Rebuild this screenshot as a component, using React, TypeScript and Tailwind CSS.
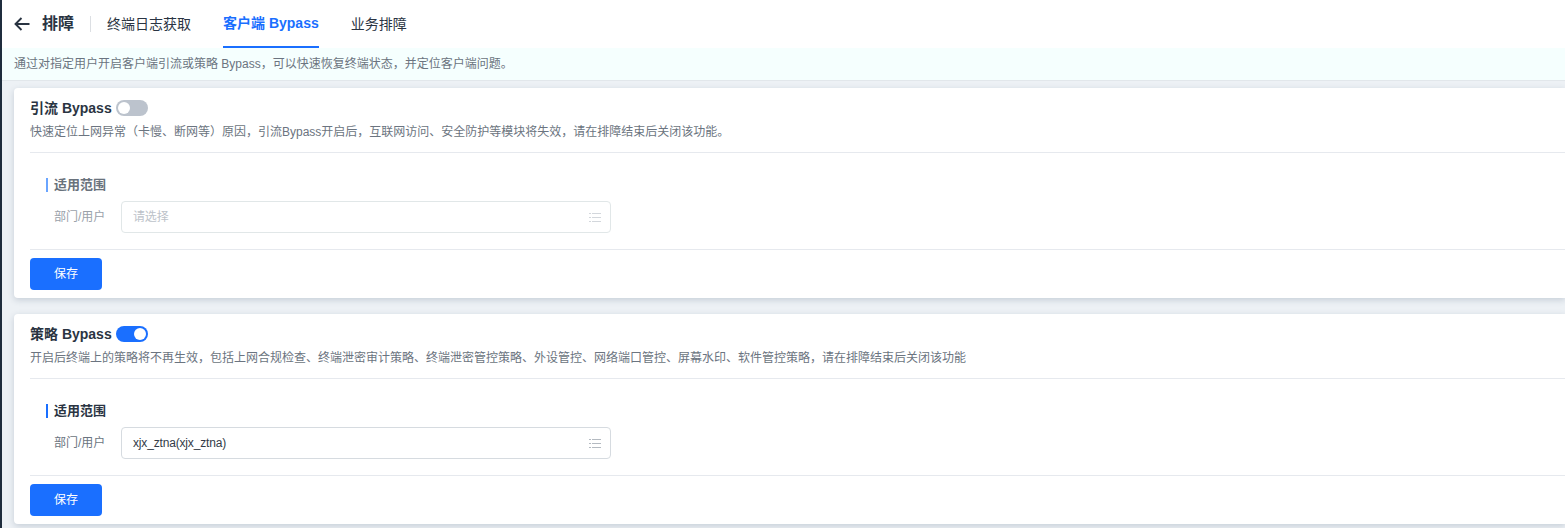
import React from "react";

const font = { fontFamily: '"Liberation Sans", "Noto Sans CJK SC", sans-serif' };

function ListIcon({ dim }: { dim: boolean }) {
  return (
    <svg width="12" height="9" viewBox="0 0 12 9" className={dim ? "text-[#d3d7dc]" : "text-[#b4bac1]"} fill="none" stroke="currentColor" strokeWidth="1">
      <path d="M0 .5h2M3 .5h9M0 4.5h2M3 4.5h9M0 8.5h2M3 8.5h9" />
    </svg>
  );
}

function Toggle({ on }: { on: boolean }) {
  return (
    <span className={`flex h-4 w-8 items-center rounded-full px-0.5 ${on ? "justify-end bg-[#1a6fff]" : "justify-start bg-[#bcc3cd]"}`}>
      <span className="h-3 w-3 rounded-full bg-white" />
    </span>
  );
}

function Card({ name, on, desc, value, disabled }: { name: string; on: boolean; desc: string; value: string; disabled: boolean }) {
  return (
    <section className="ml-3.5 rounded-l-sm bg-white pl-4 pt-2 shadow-[0_2px_6px_rgba(60,80,110,0.22)]">
      <div className="flex h-6 items-center gap-1 text-sm font-bold text-[#2a3442]">
        <span>{name} Bypass</span>
        <Toggle on={on} />
      </div>
      <p className="mt-0.5 h-5 text-xs leading-5 text-[#6b7480]">{desc}</p>
      <div className="mt-2.5 h-px bg-[#e6e9ee]" />
      <div className="pl-4">
        <h3 className={`mt-[25px] flex h-[14px] items-center border-l-2 pl-1.5 text-[13px] font-bold ${disabled ? "border-[#6aa5ff] text-[#69727c]" : "border-[#1a6fff] text-[#2a3442]"}`}>适用范围</h3>
        <div className="mt-[9px] flex items-center">
          <span className={`w-[75px] pl-2 text-xs ${disabled ? "text-[#9aa1a9]" : "text-[#6b7480]"}`}>部门/用户</span>
          <div className={`flex h-8 w-[490px] items-center justify-between rounded-sm border pl-[11px] pr-[9px] text-xs ${disabled ? "border-[#e1e7e8] text-[#bcc2c9]" : "border-[#d6dbe0] text-[#333b47]"}`}>
            <span className="tracking-[-0.17px]">{value}</span>
            <ListIcon dim={disabled} />
          </div>
        </div>
      </div>
      <div className="mt-4 h-px bg-[#e6e9ee]" />
      <button className="my-2 block h-8 w-[72px] rounded-sm bg-[#1a6fff] text-xs text-white">保存</button>
    </section>
  );
}

export default function App() {
  return (
    <div style={font} className="relative h-[528px] w-full overflow-hidden bg-[#edf1f5]">
      <header className="flex h-12 items-center bg-white pl-3.5">
        <svg width="16" height="14" viewBox="0 0 16 14" fill="none" stroke="#2a3442" strokeWidth="1.9">
          <path d="M15.5 7H1.5M7.5 1 1.5 7l6 6" />
        </svg>
        <span className="ml-3 text-base font-bold text-[#2a3442]">排障</span>
        <span className="ml-4 h-4 w-px bg-[#dcdfe3]" />
        <nav className="ml-4 flex h-12 items-center gap-8 text-sm text-[#2a3442]">
          <span>终端日志获取</span>
          <span className="flex h-12 items-center border-b-2 border-[#1a6fff] text-sm font-bold text-[#1a6fff]">客户端 Bypass</span>
          <span>业务排障</span>
        </nav>
      </header>
      <div className="flex h-[33px] items-center border-b border-[#e2e7eb] bg-[#f5fffe] pl-3.5 text-xs text-[#6b7480]">
        通过对指定用户开启客户端引流或策略 Bypass，可以快速恢复终端状态，并定位客户端问题。
      </div>
      <div className="flex flex-col gap-4 pt-[7px]">
        <Card name="引流" on={false} disabled value="请选择" desc="快速定位上网异常（卡慢、断网等）原因，引流Bypass开启后，互联网访问、安全防护等模块将失效，请在排障结束后关闭该功能。" />
        <Card name="策略" on disabled={false} value="xjx_ztna(xjx_ztna)" desc="开启后终端上的策略将不再生效，包括上网合规检查、终端泄密审计策略、终端泄密管控策略、外设管控、网络端口管控、屏幕水印、软件管控策略，请在排障结束后关闭该功能" />
      </div>
      <div className="absolute inset-y-0 left-0 w-0.5 bg-[#1f2d3d]" />
    </div>
  );
}
